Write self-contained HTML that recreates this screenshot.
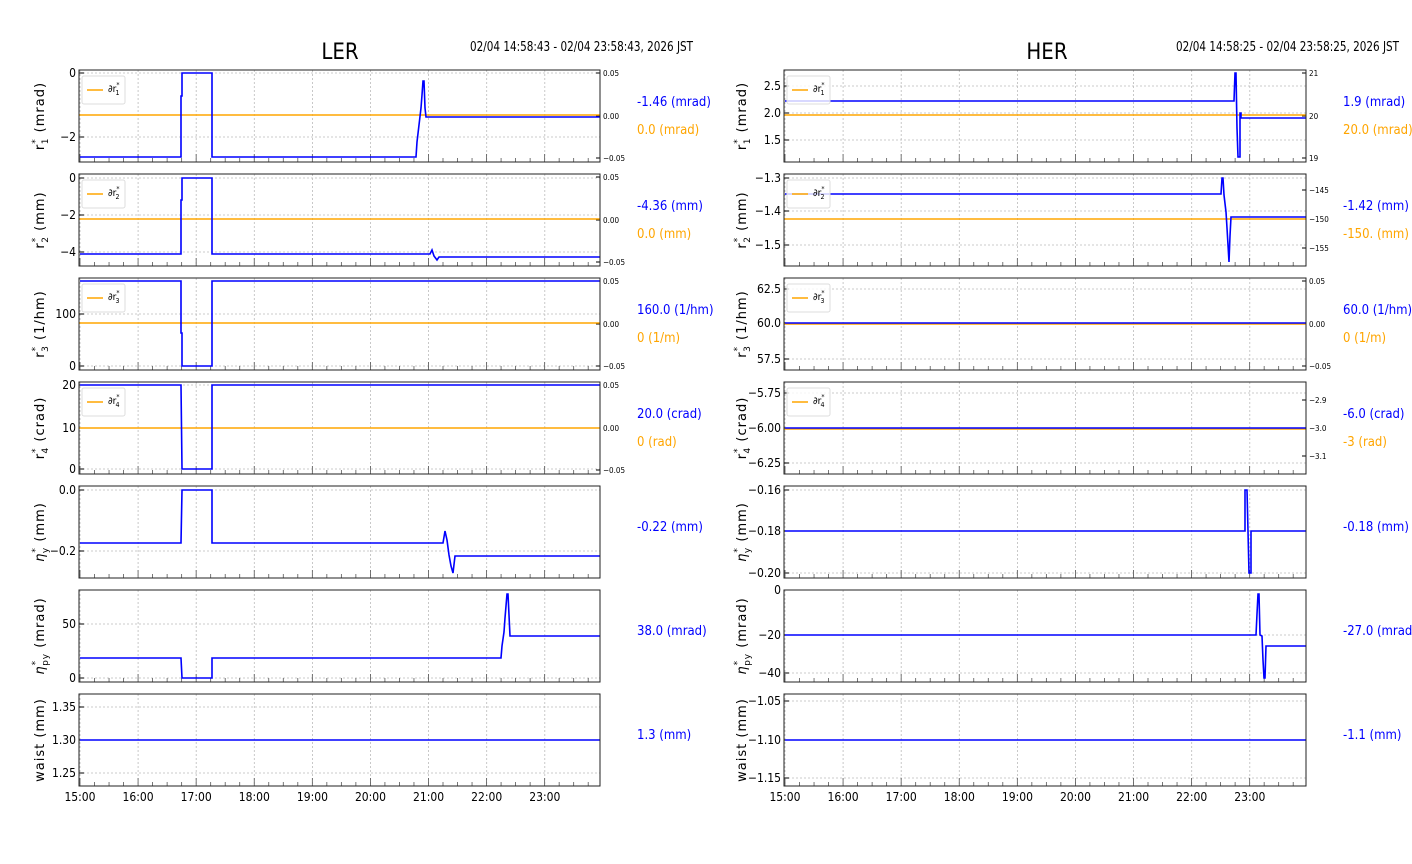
<!DOCTYPE html>
<html><head><meta charset="utf-8"><style>
html,body{margin:0;padding:0;background:#fff;}
svg{display:block;font-family:"DejaVu Sans Condensed","Liberation Sans Narrow","Liberation Sans",sans-serif;}
</style></head><body>
<svg id="s" width="1412" height="864" viewBox="0 0 1412 864" xmlns="http://www.w3.org/2000/svg"></svg>
<script>
const S=document.getElementById('s');let h='';
const B='#0000ff',O='#ffa500';
function txt(x,y,t,o){o=o||{};h+=`<text x="${x}" y="${y}" font-size="${o.fs||12}" fill="${o.c||'#000'}" text-anchor="${o.a||'start'}" ${o.ls?`letter-spacing="${o.ls}"`:''} ${o.tl?`textLength="${o.tl}" lengthAdjust="spacingAndGlyphs"`:''} ${o.tr?`transform="${o.tr}"`:''} ${o.ff?`font-family="${o.ff}"`:''}>${t}</text>`;}
function panel(x0,x1,top,lab,yt,rt,blue,org,legend,v1,v2,labx){
 const bot=top+92;
 for(let k=0;k<9;k++){const x=x0+1+k*58.1;h+=`<line x1="${x}" y1="${top}" x2="${x}" y2="${bot}" stroke="#bbb" stroke-width="0.8" stroke-dasharray="2,2"/>`;}
 yt.forEach(t=>{h+=`<line x1="${x0}" y1="${t[0]}" x2="${x1}" y2="${t[0]}" stroke="#bbb" stroke-width="0.8" stroke-dasharray="2,2"/>`;
  h+=`<line x1="${x0}" y1="${t[0]}" x2="${x0+5}" y2="${t[0]}" stroke="#000"/>`;
  txt(x0-3,t[0]+4,t[1],{a:'end',fs:12});});
 for(let k=0;k<36;k++){const x=x0+1+k*14.52;const L=k%4==0?8:4;h+=`<line x1="${x}" y1="${bot}" x2="${x}" y2="${bot-L}" stroke="#555" stroke-width="0.8"/>`;}
 if(rt){rt.forEach(t=>{h+=`<line x1="${x1}" y1="${t[0]}" x2="${x1-4}" y2="${t[0]}" stroke="#000"/>`;txt(x1+3,t[0]+3,t[1],{fs:8});});}
 if(org!=null)h+=`<line x1="${x0}" y1="${org}" x2="${x1}" y2="${org}" stroke="${O}" stroke-width="1.5"/>`;
 h+=`<polyline points="${blue}" fill="none" stroke="${B}" stroke-width="1.6"/>`;
 h+=`<rect x="${x0}" y="${top}" width="${x1-x0}" height="92" fill="none" stroke="#222" stroke-width="1"/>`;
 if(legend){h+=`<rect x="${x0+3}" y="${top+6}" width="43" height="28" rx="2" fill="#fff" fill-opacity="0.8" stroke="#ddd"/>`;
  h+=`<line x1="${x0+8}" y1="${top+20}" x2="${x0+24}" y2="${top+20}" stroke="${O}" stroke-width="1.5"/>`;
  txt(x0+29,top+22,`∂r<tspan font-size="7" dy="-5">*</tspan><tspan font-size="7" dx="-4" dy="8">${legend}</tspan>`,{fs:10});}
 txt(labx,top+46,lab,{a:'middle',fs:13,ls:1,ff:'DejaVu Sans',tr:`rotate(-90 ${labx} ${top+46})`});
 if(v1&&v2){txt(x1+37,top+36,v1,{c:B,fs:13});txt(x1+37,top+64,v2,{c:O,fs:13});}
 else if(v1)txt(x1+37,top+45,v1,{c:B,fs:13});
}
const L0=79,L1=600,R0=784,R1=1306;
function lab(n,u){return `r<tspan font-size="9" dy="-6">*</tspan><tspan font-size="9" dx="-6" dy="10">${n}</tspan><tspan dy="-4"> (${u})</tspan>`;}
function elab(n,u){return `<tspan font-style="italic">η</tspan><tspan font-size="9" dy="-6">*</tspan><tspan font-size="9" dx="-6" dy="10">${n}</tspan><tspan dy="-4"> (${u})</tspan>`;}
function rtl(top){return [[top+3,'0.05'],[top+46,'0.00'],[top+88,'−0.05']];}
const LX=44,RX=746;
panel(L0,L1,70,lab(1,'mrad'),[[73,'0'],[137,'−2']],rtl(70),
 '80,157 181,157 181,96 182,96 182,73 212,73 212,157 416,157 417,142 419,125 421,108 422,95 423,81 424,81 425,108 426,117 600,117',115,1,'-1.46 (mrad)','0.0 (mrad)',LX);
panel(L0,L1,174,lab(2,'mm'),[[178,'0'],[215,'−2'],[252,'−4']],rtl(174),
 '80,254 181,254 181,200 182,200 182,178 212,178 212,254 430,254 432,250 434,256 437,260 439,257 600,257',219,2,'-4.36 (mm)','0.0 (mm)',LX);
panel(L0,L1,278,lab(3,'1/hm'),[[314,'100'],[366,'0']],rtl(278),
 '80,281 181,281 181,333 182,333 182,366 212,366 212,281 600,281',323,3,'160.0 (1/hm)','0 (1/m)',LX);
panel(L0,L1,382,lab(4,'crad'),[[385,'20'],[428,'10'],[469,'0']],rtl(382),
 '80,385 181,385 182,469 212,469 212,385 600,385',428,4,'20.0 (crad)','0 (rad)',LX);
panel(L0,L1,486,elab('y','mm'),[[490,'0.0'],[551,'−0.2']],null,
 '80,543 181,543 182,490 212,490 212,543 443,543 445,531 447,540 449,555 451,566 453,573 455,556 600,556',null,null,'-0.22 (mm)',null,LX);
panel(L0,L1,590,elab('py','mrad'),[[624,'50'],[678,'0']],null,
 '80,658 181,658 182,678 212,678 212,658 501,658 502,646 504,632 505,618 506,606 507,594 508,594 509,615 510,636 600,636',null,null,'38.0 (mrad)',null,LX);
panel(L0,L1,694,'waist (mm)',[[707,'1.35'],[740,'1.30'],[773,'1.25']],null,'80,740 600,740',null,null,'1.3 (mm)',null,LX);
panel(R0,R1,70,lab(1,'mrad'),[[86,'2.5'],[113,'2.0'],[140,'1.5']],[[73,'21'],[116,'20'],[158,'19']],
 '785,101 1234,101 1235,73 1236,73 1237,128 1238,157 1240,157 1240,113 1241,113 1241,118 1306,118',115,1,'1.9 (mrad)','20.0 (mrad)',RX);
panel(R0,R1,174,lab(2,'mm'),[[178,'−1.3'],[211,'−1.4'],[245,'−1.5']],[[190,'−145'],[219,'−150'],[248,'−155']],
 '785,194 1221,194 1222,178 1223,178 1224,195 1226,212 1227,228 1228,245 1229,262 1230,236 1231,217 1306,217',219,2,'-1.42 (mm)','-150. (mm)',RX);
panel(R0,R1,278,lab(3,'1/hm'),[[289,'62.5'],[323,'60.0'],[359,'57.5']],rtl(278),'785,323 1306,323',324,3,'60.0 (1/hm)','0 (1/m)',RX);
panel(R0,R1,382,lab(4,'crad'),[[393,'−5.75'],[428,'−6.00'],[463,'−6.25']],[[400,'−2.9'],[428,'−3.0'],[456,'−3.1']],'785,428 1306,428',429,4,'-6.0 (crad)','-3 (rad)',RX);
panel(R0,R1,486,elab('y','mm'),[[490,'−0.16'],[531,'−0.18'],[573,'−0.20']],null,
 '785,531 1245,531 1245,490 1247,490 1248,531 1249,573 1251,573 1251,531 1306,531',null,null,'-0.18 (mm)',null,RX);
panel(R0,R1,590,elab('py','mrad'),[[590,'0'],[635,'−20'],[673,'−40']],null,
 '785,635 1256,635 1257,614 1258,594 1259,594 1260,635 1262,636 1263,660 1264,678 1265,678 1266,646 1306,646',null,null,'-27.0 (mrad)',null,RX);
panel(R0,R1,694,'waist (mm)',[[701,'−1.05'],[740,'−1.10'],[778,'−1.15']],null,'785,740 1306,740',null,null,'-1.1 (mm)',null,RX);
const hrs=['15:00','16:00','17:00','18:00','19:00','20:00','21:00','22:00','23:00'];
hrs.forEach((t,k)=>{txt(L0+1+k*58.1,801,t,{a:'middle',fs:12});txt(R0+1+k*58.1,801,t,{a:'middle',fs:12});});
txt(340,59,'LER',{a:'middle',fs:22});
txt(1047,59,'HER',{a:'middle',fs:22});
txt(470,51,'02/04 14:58:43 - 02/04 23:58:43, 2026 JST',{fs:13,tl:223});
txt(1176,51,'02/04 14:58:25 - 02/04 23:58:25, 2026 JST',{fs:13,tl:223});
S.innerHTML=h;
</script>
</body></html>
